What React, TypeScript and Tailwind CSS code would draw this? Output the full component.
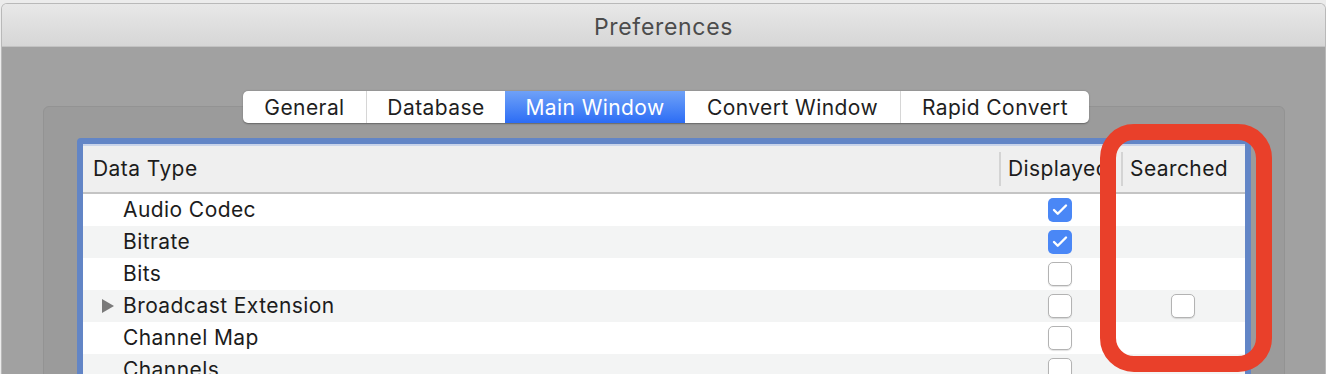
import { Check } from 'lucide-react';

type Row = { name: string; displayed: boolean; searched?: boolean; expandable?: boolean };

const rows: Row[] = [
  { name: 'Audio Codec', displayed: true },
  { name: 'Bitrate', displayed: true },
  { name: 'Bits', displayed: false },
  { name: 'Broadcast Extension', displayed: false, searched: false, expandable: true },
  { name: 'Channel Map', displayed: false },
  { name: 'Channels', displayed: false },
];

const tabs = [
  { label: 'General', w: 'w-[123px]' },
  { label: 'Database', w: 'w-[139px]' },
  { label: 'Main Window', w: 'w-[180px]' },
  { label: 'Convert Window', w: 'w-[215px]' },
  { label: 'Rapid Convert', w: 'w-[189px]' },
];

function CheckBox({ checked }: { checked: boolean }) {
  if (checked) {
    return (
      <div className="w-[24px] h-[24px] rounded-[5px] bg-[#4a87f6] flex items-center justify-center">
        <Check className="w-[18px] h-[18px] text-white" strokeWidth={3.2} />
      </div>
    );
  }
  return (
    <div className="w-[24px] h-[24px] rounded-[5px] bg-white border border-[#b3b3b3] shadow-[0_1px_1px_rgba(0,0,0,0.12)]" />
  );
}

export default function App() {
  return (
    <div
      className="relative w-[1326px] h-[374px] overflow-hidden bg-[#ececec] pt-[3px]"
      style={{ fontFamily: 'Inter, "Liberation Sans", sans-serif' }}
    >
      <div className="h-full flex flex-col rounded-t-[6px] border-l border-r border-t border-[#b9b9b9] overflow-hidden ml-px">
        {/* title bar */}
        <div className="h-[43px] shrink-0 flex items-center justify-center bg-gradient-to-b from-[#e8e8e8] to-[#d6d6d6] border-b border-[#c2c2c2]">
          <span className="text-[23px] tracking-[0.03em] text-[#4c4c4c] pt-[4px]">Preferences</span>
        </div>

        {/* dimmed content */}
        <div className="flex-1 bg-[#a1a1a1] pl-[41px] pr-[40px] flex flex-col">
          <div className="relative z-10 mt-[44px] ml-[200px] flex h-[32px] self-start rounded-[5px] bg-white shadow-[0_0.5px_1.5px_rgba(0,0,0,0.35)] overflow-hidden">
            {tabs.map((t, i) => {
              const active = t.label === 'Main Window';
              return (
                <div
                  key={t.label}
                  className={`${t.w} flex items-center justify-center pt-[2px] text-[21px] tracking-[0.02em] ${
                    active
                      ? 'bg-gradient-to-b from-[#6fa1f7] to-[#2c6cf5] text-white'
                      : 'text-[#1f1f1f]'
                  } ${i > 0 && !active && tabs[i - 1].label !== 'Main Window' ? 'border-l border-[#d6d6d6]' : ''}`}
                >
                  {t.label}
                </div>
              );
            })}
          </div>

          <div className="mt-[-17px] flex-1 rounded-[6px] border border-[#939393] bg-[#9b9b9b] px-[33px] pt-[31px]">
            <div className="h-[400px] rounded-[4px] border-[6px] border-[#6285c6] bg-white overflow-hidden flex flex-col">
              {/* header */}
              <div className="h-[50px] shrink-0 flex bg-[#efefef] border-t-2 border-t-[#c9d4ea] border-b-2 border-b-[#c4c4c4] text-[21px] tracking-[0.02em] text-[#1c1c1c]">
                <div className="w-[916px] flex items-center pl-[10px]">Data Type</div>
                <div className="w-[122px] flex items-center overflow-hidden whitespace-nowrap">
                  <div className="w-[2px] h-[34px] bg-[#d4d4d4] shrink-0" />
                  <span className="pl-[7px]">Displayed</span>
                </div>
                <div className="w-[123px] flex items-center overflow-hidden whitespace-nowrap">
                  <div className="w-[2px] h-[34px] bg-[#d4d4d4] shrink-0" />
                  <span className="pl-[7px]">Searched</span>
                </div>
              </div>

              {/* rows */}
              {rows.map((r, i) => (
                <div
                  key={r.name}
                  className={`h-[32px] shrink-0 flex items-center text-[21px] tracking-[0.02em] text-[#1c1c1c] ${
                    i % 2 === 1 ? 'bg-[#f3f4f4]' : 'bg-white'
                  }`}
                >
                  <div className="w-[916px] flex items-center">
                    <div className="w-[40px] flex justify-end pr-[8px]">
                      {r.expandable && (
                        <svg width="14" height="16" viewBox="0 0 14 16">
                          <path d="M1 1 L13 8 L1 15 Z" fill="#7a7a7a" />
                        </svg>
                      )}
                    </div>
                    <span>{r.name}</span>
                  </div>
                  <div className="w-[122px] flex items-center justify-center">
                    <CheckBox checked={r.displayed} />
                  </div>
                  <div className="w-[123px] flex items-center justify-center">
                    {r.searched !== undefined && <CheckBox checked={r.searched} />}
                  </div>
                </div>
              ))}
            </div>
          </div>
        </div>
      </div>

      {/* red annotation */}
      <div className="absolute left-[1100px] top-[124px] w-[172px] h-[248px] rounded-[34px] border-[16px] border-[#e9402a]" />
    </div>
  );
}
